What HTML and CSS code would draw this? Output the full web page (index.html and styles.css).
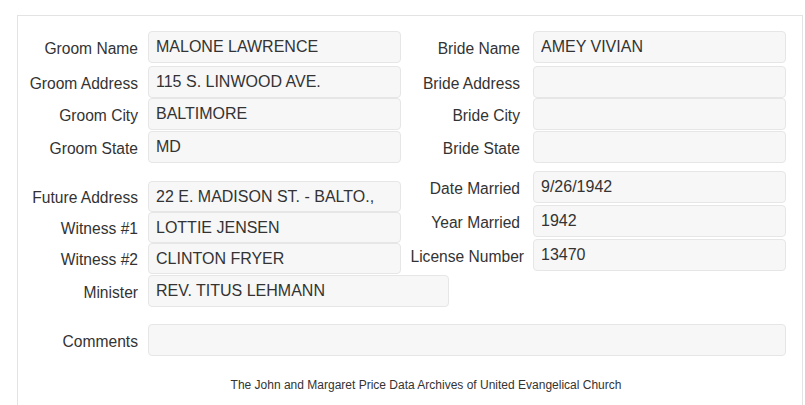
FILE: index.html
```html
<!DOCTYPE html>
<html lang="en">
<head>
  <meta charset="UTF-8">
  <meta name="viewport" content="width=device-width, initial-scale=1.0">
  <title>Marriage Record</title>
  <link rel="stylesheet" href="styles.css">
</head>
<body>

  <div class="panel">

    <div class="columns">
      <div class="half left">
        <div class="field first">
          <label>Groom Name</label>
          <input type="text" class="value" value="MALONE LAWRENCE" readonly>
        </div>
        <div class="field second">
          <label>Groom Address</label>
          <input type="text" class="value" value="115 S. LINWOOD AVE." readonly>
        </div>
        <div class="field">
          <label>Groom City</label>
          <input type="text" class="value" value="BALTIMORE" readonly>
        </div>
        <div class="field">
          <label>Groom State</label>
          <input type="text" class="value" value="MD" readonly>
        </div>
      </div>

      <div class="half right">
        <div class="field first">
          <label>Bride Name</label>
          <input type="text" class="value" value="AMEY VIVIAN" readonly>
        </div>
        <div class="field second">
          <label>Bride Address</label>
          <input type="text" class="value" value="" readonly>
        </div>
        <div class="field">
          <label>Bride City</label>
          <input type="text" class="value" value="" readonly>
        </div>
        <div class="field">
          <label>Bride State</label>
          <input type="text" class="value" value="" readonly>
        </div>
      </div>
    </div>

    <div class="columns">
      <div class="half left lower-left">
        <div class="field tight">
          <label>Future Address</label>
          <input type="text" class="value" value="22 E. MADISON ST. - BALTO.," readonly>
        </div>
        <div class="field tight">
          <label>Witness #1</label>
          <input type="text" class="value" value="LOTTIE JENSEN" readonly>
        </div>
        <div class="field tight">
          <label>Witness #2</label>
          <input type="text" class="value" value="CLINTON FRYER" readonly>
        </div>
      </div>

      <div class="half right lower-right">
        <div class="field spaced">
          <label>Date Married</label>
          <input type="text" class="value" value="9/26/1942" readonly>
        </div>
        <div class="field spaced">
          <label>Year Married</label>
          <input type="text" class="value" value="1942" readonly>
        </div>
        <div class="field spaced">
          <label class="nowrap">License Number</label>
          <input type="text" class="value" value="13470" readonly>
        </div>
      </div>
    </div>

    <div class="field minister">
      <label>Minister</label>
      <input type="text" class="value" value="REV. TITUS LEHMANN" readonly>
    </div>

    <div class="field comments">
      <label>Comments</label>
      <input type="text" class="value" value="" readonly>
    </div>

    <div class="footer">The John and Margaret Price Data Archives of United Evangelical Church</div>

  </div>

</body>
</html>
```

FILE: styles.css
```css
body {
  margin: 0;
  padding: 0;
  background-color: white;
  color: #333;
  font-family: "Liberation Sans", Arial, sans-serif;
  font-size: 16px;
  overflow: hidden;
}
.panel {
  margin: 15px 0 0 17px;
  width: 768px;
  height: 374px;
  border: 1px solid #e3e3e3;
  border-bottom: none;
  padding: 15px 16px 0 0;
}
.columns {
  display: flex;
}
.half.left {
  width: 383px;
}
.half.right {
  width: 385px;
}
.field {
  display: grid;
  grid-template-columns: 120px 1fr;
  column-gap: 10px;
  align-items: center;
  margin-bottom: 1px;
}
.field.first {
  margin-bottom: 3px;
}
.field.second {
  margin-bottom: 0;
}
.half.right .field {
  grid-template-columns: 119px 1fr;
  column-gap: 13px;
}
.field label {
  text-align: right;
  padding-top: 3px;
  font-size: 15.6px;
}
.field label.nowrap {
  white-space: nowrap;
  margin-left: -8px;
  margin-right: -4px;
}
.value {
  box-sizing: border-box;
  width: 100%;
  height: 32px;
  margin: 0;
  padding: 0 7px;
  border: 1px solid #e6e6e6;
  border-radius: 4px;
  background-color: #f7f7f7;
  color: #333;
  font-family: "Liberation Sans", Arial, sans-serif;
  font-size: 16px;
  outline: none;
}
.lower-left {
  margin-top: 17px;
}
.lower-right {
  margin-top: 7px;
}
.field.tight {
  margin-bottom: 0;
}
.field.tight .value {
  height: 31px;
}
.field.spaced {
  margin-bottom: 2px;
}
.field.minister {
  grid-template-columns: 120px 301px;
  margin-top: 1px;
}
.field.comments {
  margin-top: 17px;
}
.footer {
  margin-top: 22px;
  padding-left: 48px;
  text-align: center;
  font-size: 12px;
}
```
